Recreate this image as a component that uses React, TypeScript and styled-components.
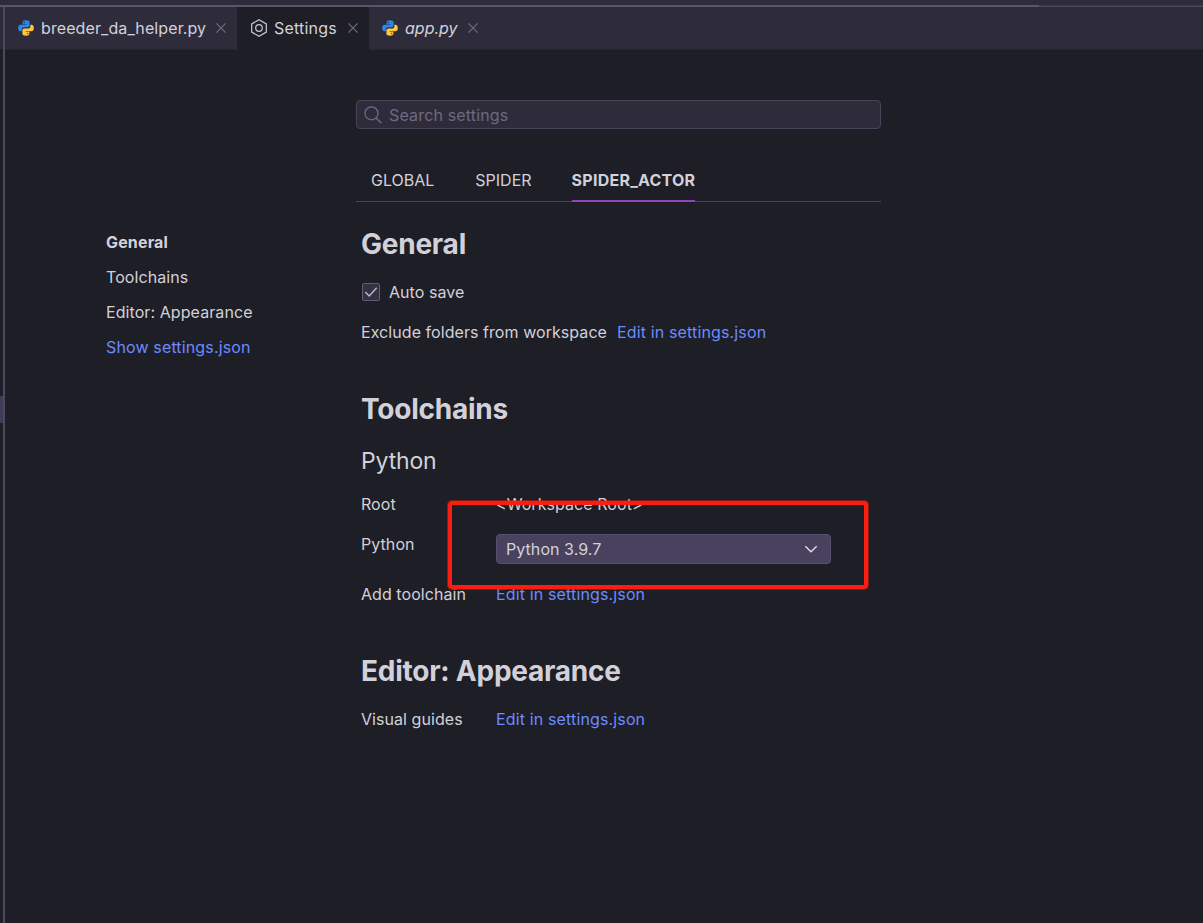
import React from "react";
import styled, { createGlobalStyle, css } from "styled-components";

const GlobalStyle = createGlobalStyle`
  * { box-sizing: border-box; }
  html, body { margin: 0; background: #1e1e26; overflow: hidden; }
  body { font-family: Inter, "Liberation Sans", sans-serif; font-size: 16px; color: #d2d1da; }
  h1, h2, p { margin: 0; }
`;

const Shell = styled.div`
  display: flex;
  flex-direction: column;
  width: 1203px;
  height: 923px;
  background: #1e1e26;
`;

const TitleStrip = styled.div`
  display: flex;
  align-items: flex-end;
  flex: 0 0 7px;
  background: #2e2c3a;
  box-shadow: inset 0 -1px #4c4960, inset 0 -2px #3b394a;
`;

const TitleLine = styled.div`
  width: 1039px;
  height: 2px;
  background: #59566c;
`;

const Body = styled.div`
  display: flex;
  flex: 1;
  min-height: 0;
`;

const Gutter = styled.div`
  display: flex;
  flex-direction: column;
  flex: 0 0 5px;
  border-right: 2px solid #4c4860;
`;

const GutterHeader = styled.div`
  height: 42px;
  background: #2e2c3a;
`;

const GutterMark = styled.div`
  height: 27px;
  margin-top: 347px;
  background: #403b56;
`;

const Editor = styled.main`
  display: flex;
  flex-direction: column;
  flex: 1;
`;

const TabBar = styled.nav`
  display: flex;
  height: 43px;
  background: #2e2c3a;
  border-bottom: 1px solid #272631;
`;

const Tab = styled.div<{ $width: number; $active?: boolean }>`
  display: flex;
  align-items: center;
  width: ${(p) => p.$width}px;
  height: 43px;
  padding: 0 11px 1px 13px;
  background: ${(p) => (p.$active ? "#1e1e26" : "transparent")};
  svg { flex: none; }
`;

const TabLabel = styled.span<{ $italic?: boolean; $gap: number; $spacing: number }>`
  flex: 1;
  margin-left: ${(p) => p.$gap}px;
  white-space: nowrap;
  letter-spacing: ${(p) => p.$spacing}px;
  font-style: ${(p) => (p.$italic ? "italic" : "normal")};
`;

const Page = styled.div`
  display: flex;
  padding: 50px 0 0 101px;
`;

const Sidebar = styled.aside`
  display: flex;
  flex-direction: column;
  flex: 0 0 250px;
  padding-top: 125px;
`;

const linkStyle = css`
  color: #6b8bff;
  letter-spacing: 0.14px;
`;

const SideItem = styled.a<{ $bold?: boolean; $link?: boolean }>`
  line-height: 35px;
  font-weight: ${(p) => (p.$bold ? 700 : 400)};
  letter-spacing: ${(p) => (p.$bold ? 0.15 : 0.08)}px;
  ${(p) => p.$link && linkStyle}
`;

const Content = styled.section`
  width: 525px;
`;

const SearchBox = styled.div`
  display: flex;
  align-items: center;
  gap: 7px;
  height: 29px;
  padding: 0 7px;
  color: #6d6a80;
  background: #2e2c3a;
  border: 1px solid #48455a;
  border-radius: 4px;
  letter-spacing: 0.16px;
`;

const Scopes = styled.div`
  display: flex;
  gap: 41px;
  height: 43px;
  margin-top: 30px;
  padding-left: 15px;
  border-bottom: 1px solid #48455a;
`;

const Scope = styled.div<{ $active?: boolean }>`
  height: 43px;
  line-height: 42px;
  margin-left: ${(p) => (p.$active ? -1 : 0)}px;
  font-weight: ${(p) => (p.$active ? 700 : 400)};
  letter-spacing: ${(p) => (p.$active ? 0.24 : 0)}px;
  box-shadow: ${(p) => (p.$active ? "inset 0 -2px #8f44bd" : "none")};
`;

const Group = styled.div`
  margin-top: 37px;
  padding-left: 5px;
  &:first-of-type { margin-top: 0; }
`;

const Groups = styled.div`
  padding-top: 22px;
`;

const Heading = styled.h1`
  height: 48px;
  font-size: 28px;
  line-height: 40px;
  font-weight: 700;
  letter-spacing: -0.24px;
`;

const Subheading = styled.h2`
  height: 40px;
  margin-top: 4px;
  margin-bottom: 3px;
  font-size: 23px;
  line-height: 40px;
  font-weight: 400;
  letter-spacing: -0.15px;
`;

const Row = styled.div<{ $height?: number }>`
  display: flex;
  height: ${(p) => p.$height ?? 40}px;
  line-height: 40px;
  letter-spacing: 0.06px;
  white-space: nowrap;
`;

const RowLabel = styled.span<{ $fixed?: boolean }>`
  width: ${(p) => (p.$fixed ? "135px" : "auto")};
  margin-right: ${(p) => (p.$fixed ? 0 : 10)}px;
`;

const Link = styled.a`
  ${linkStyle}
`;

const CheckBox = styled.span`
  display: grid;
  place-items: center;
  width: 18px;
  height: 18px;
  margin: 11px 9px 0 1px;
  background: #343142;
  border: 1px solid #615b7b;
  border-radius: 2px;
`;

const SelectBox = styled.div`
  display: flex;
  align-items: center;
  justify-content: space-between;
  width: 335px;
  height: 30px;
  margin-top: 10px;
  padding: 0 12px 0 9px;
  background: #48425e;
  border: 1px solid #57516f;
  border-radius: 4px;
`;

const Highlight = styled.div`
  position: absolute;
  left: 448px;
  top: 501px;
  width: 420px;
  height: 88px;
  border: 4px solid #fb1d10;
  border-radius: 4px;
  box-shadow: 0 0 0 1px rgba(251, 29, 16, 0.45);
`;

const PythonIcon = () => (
  <svg width="16" height="16" viewBox="0 0 16 16">
    <path fill="#2688f5" d="M8 .3C5.400.300 4.600 1.200 4.600 2.500v1.700h3.800v.6H2.800C1.100 4.800.2 5.900.2 8s.9 3.300 2.300 3.300h1.300V9.500c0-1.400 1.100-2.300 2.400-2.300h3.500c1.100 0 1.900-.8 1.900-1.900V2.500C11.600 1 10.400.3 8 .3Z" />
    <path fill="#ffc83d" d="M8 15.700c2.600 0 3.400-.9 3.400-2.200v-1.700H7.600v-.6h5.600c1.700 0 2.600-1.100 2.600-3.200s-.9-3.300-2.300-3.300h-1.100v1.600c0 1.400-1.100 2.300-2.400 2.300H6.500c-1.200 0-2.100.8-2.100 1.900v3c0 1.500 1.200 2.200 3.600 2.200Z" />
    <circle cx="6.300" cy="2.500" r=".75" fill="#1e3556" />
    <circle cx="9.700" cy="13.500" r=".75" fill="#5b4a25" />
  </svg>
);

const HexIcon = () => (
  <svg width="18" height="18" viewBox="0 0 18 18" fill="none" stroke="#c9c8d0" strokeWidth="1.2">
    <path d="M9 .8 16.300 4.900v8.200L9 17.200 1.700 13.100V4.900Z" />
    <circle cx="9" cy="9" r="3.300" />
  </svg>
);

const CloseIcon = () => (
  <svg width="10" height="10" viewBox="0 0 10 10" stroke="#716f80" strokeWidth="1.1">
    <path d="m.4.4 9.200 9.200M9.600.4.4 9.600" />
  </svg>
);

const SearchIcon = () => (
  <svg width="18" height="18" viewBox="0 0 18 18" fill="none" stroke="#716e84" strokeWidth="1.2">
    <circle cx="7.500" cy="7.300" r="6.500" />
    <path d="m12 12 5.500 5.300" />
  </svg>
);

const CheckIcon = () => (
  <svg width="14" height="12" viewBox="0 0 14 12" fill="none" stroke="#b9b7c5" strokeWidth="1.5">
    <path d="m1.300 6 3.900 4L12.700 1.700" />
  </svg>
);

const ChevronIcon = () => (
  <svg width="14" height="8" viewBox="0 0 14 8" fill="none" stroke="#e0dfe7" strokeWidth="1.4">
    <path d="m1.300 1.200 5.700 5.500 5.700-5.500" />
  </svg>
);

export default function App() {
  return (
    <>
      <GlobalStyle />
      <Shell>
        <TitleStrip><TitleLine /></TitleStrip>
        <Body>
          <Gutter><GutterHeader /><GutterMark /></Gutter>
          <Editor>
            <TabBar>
              <Tab $width={232}>
                <PythonIcon />
                <TabLabel $gap={7} $spacing={0.1}>breeder_da_helper.py</TabLabel>
                <CloseIcon />
              </Tab>
              <Tab $width={132} $active>
                <HexIcon />
                <TabLabel $gap={6} $spacing={0.2}>Settings</TabLabel>
                <CloseIcon />
              </Tab>
              <Tab $width={120}>
                <PythonIcon />
                <TabLabel $gap={7} $spacing={0} $italic>app.py</TabLabel>
                <CloseIcon />
              </Tab>
            </TabBar>
            <Page>
              <Sidebar>
                <SideItem $bold>General</SideItem>
                <SideItem>Toolchains</SideItem>
                <SideItem>Editor: Appearance</SideItem>
                <SideItem $link>Show settings.json</SideItem>
              </Sidebar>
              <Content>
                <SearchBox><SearchIcon /><span>Search settings</span></SearchBox>
                <Scopes>
                  <Scope>GLOBAL</Scope>
                  <Scope>SPIDER</Scope>
                  <Scope $active>SPIDER_ACTOR</Scope>
                </Scopes>
                <Groups>
                  <Group>
                    <Heading>General</Heading>
                    <Row><CheckBox><CheckIcon /></CheckBox><span>Auto save</span></Row>
                    <Row>
                      <RowLabel>Exclude folders from workspace</RowLabel>
                      <Link>Edit in settings.json</Link>
                    </Row>
                  </Group>
                  <Group>
                    <Heading>Toolchains</Heading>
                    <Subheading>Python</Subheading>
                    <Row><RowLabel $fixed>Root</RowLabel><span>&lt;Workspace Root&gt;</span></Row>
                    <Row $height={50}>
                      <RowLabel $fixed>Python</RowLabel>
                      <SelectBox><span>Python 3.9.7</span><ChevronIcon /></SelectBox>
                    </Row>
                    <Row><RowLabel $fixed>Add toolchain</RowLabel><Link>Edit in settings.json</Link></Row>
                  </Group>
                  <Group>
                    <Heading>Editor: Appearance</Heading>
                    <Row><RowLabel $fixed>Visual guides</RowLabel><Link>Edit in settings.json</Link></Row>
                  </Group>
                </Groups>
              </Content>
            </Page>
          </Editor>
        </Body>
        <Highlight />
      </Shell>
    </>
  );
}
